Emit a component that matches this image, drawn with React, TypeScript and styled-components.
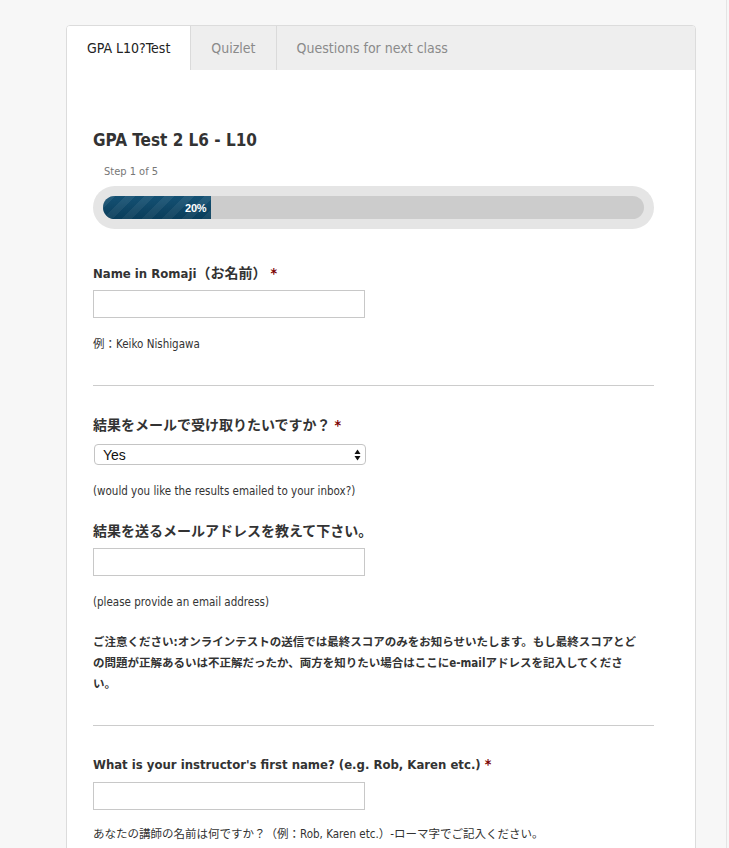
import styled, { createGlobalStyle } from 'styled-components';

const GlobalStyle = createGlobalStyle`
  html, body {
    margin: 0;
    padding: 0;
    background: #f7f7f7;
  }
  body {
    font-family: "DejaVu Sans Condensed", "DejaVu Sans", "Noto Sans CJK JP", sans-serif;
    color: #333;
  }
`;

const Page = styled.div`
  width: 727px;
  min-height: 848px;
  border-right: 1px solid #e4e4e4;
  background: #f7f7f7;
  padding: 25px 0 0 66px;
  box-sizing: border-box;
`;

const Card = styled.div`
  width: 630px;
  background: #fff;
  border: 1px solid #dcdcdc;
  border-radius: 4px;
  overflow: hidden;
  box-sizing: border-box;
`;

const TabBar = styled.div`
  display: flex;
  height: 44px;
  background: #eeeeee;
`;

const Tab = styled.div<{ $active?: boolean }>`
  display: flex;
  align-items: center;
  padding: 0 20px;
  font-size: 14px;
  color: ${p => (p.$active ? '#222' : '#8a8a8a')};
  background: ${p => (p.$active ? '#fff' : 'transparent')};
  border-right: 1px solid #dadada;
  white-space: nowrap;

  &:last-child {
    border-right: 0;
  }
`;

const Body = styled.div`
  padding: 59px 41px 40px 26px;
`;

const Title = styled.h2`
  margin: 0;
  font-size: 17px;
  line-height: 22px;
  font-weight: bold;
  color: #333;
`;

const StepText = styled.div`
  margin: 14px 0 0 11px;
  font-size: 11px;
  line-height: 14px;
  color: #777;
`;

const ProgressOuter = styled.div`
  margin-top: 7px;
  height: 43px;
  padding: 10px;
  box-sizing: border-box;
  background: #e5e5e5;
  border-radius: 22px;
`;

const ProgressTrack = styled.div`
  height: 23px;
  background: #cccccc;
  border-radius: 12px;
  overflow: hidden;
  display: flex;
`;

const ProgressFill = styled.div`
  height: 100%;
  display: flex;
  align-items: center;
  justify-content: flex-end;
  padding-right: 5px;
  box-sizing: border-box;
  background-color: #0b4a6e;
  background-image:
    linear-gradient(to bottom, rgba(255, 255, 255, 0.04), rgba(0, 0, 0, 0.18)),
    repeating-linear-gradient(
      -45deg,
      rgba(255, 255, 255, 0.07) 0 7px,
      transparent 7px 14px
    );
  color: #fff;
  font-family: "Liberation Sans", Arial, sans-serif;
  font-weight: bold;
  font-size: 11px;
  letter-spacing: -0.3px;
`;

const Field = styled.div<{ $top: number }>`
  margin-top: ${p => p.$top}px;
`;

const Label = styled.div`
  height: 18px;
  font-size: 13px;
  line-height: 18px;
  font-weight: bold;
  color: #333;
  white-space: nowrap;
`;

const Jp = styled.span`
  font-family: "Noto Sans CJK JP", sans-serif;
  font-size: 14px;
  line-height: 18px;
`;

const Required = styled.span`
  color: #7a0000;
  margin-left: 4px;
  font-size: 14px;
  line-height: 18px;
`;

const TextInput = styled.input`
  display: block;
  margin-top: 9px;
  width: 272px;
  height: 28px;
  border: 1px solid #c8c8c8;
  box-sizing: border-box;
  background: #fff;
  padding: 0 6px;
`;

const SelectBox = styled.div`
  margin-top: 11px;
  margin-left: 1px;
  width: 272px;
  height: 21px;
  border: 1px solid #c4c4c4;
  border-radius: 4px;
  box-sizing: border-box;
  display: flex;
  align-items: center;
  justify-content: space-between;
  padding: 0 4px 0 8px;
  font-family: "Liberation Sans", Arial, sans-serif;
  font-size: 14px;
  color: #111;
  background: #fff;
`;

const Help = styled.div<{ $top?: number }>`
  margin-top: ${p => p.$top ?? 19}px;
  font-size: 11.5px;
  line-height: 14px;
  color: #333;
`;

const Note = styled.div`
  margin-top: 23px;
  font-size: 11.5px;
  line-height: 21px;
  font-weight: bold;
  color: #333;
`;

const Divider = styled.hr<{ $top: number }>`
  margin: ${p => p.$top}px 0 0;
  border: 0;
  border-top: 1px solid #cccccc;
`;

const Arrows = () => (
  <svg width="7" height="12" viewBox="0 0 7 12">
    <path d="M3.5 0.5 L6.5 5 L0.5 5 Z" fill="#111" />
    <path d="M3.5 11.5 L6.5 7 L0.5 7 Z" fill="#111" />
  </svg>
);

export default function App() {
  return (
    <>
      <GlobalStyle />
      <Page>
        <Card>
          <TabBar>
            <Tab $active>GPA L10?Test</Tab>
            <Tab>Quizlet</Tab>
            <Tab>Questions for next class</Tab>
          </TabBar>
          <Body>
            <Title>GPA Test 2 L6 - L10</Title>
            <StepText>Step 1 of 5</StepText>
            <ProgressOuter>
              <ProgressTrack>
                <ProgressFill style={{ width: '20%' }}>20%</ProgressFill>
              </ProgressTrack>
            </ProgressOuter>

            <Field $top={34}>
              <Label>
                Name in Romaji<Jp>（お名前）</Jp>
                <Required>*</Required>
              </Label>
              <TextInput type="text" />
              <Help>例：Keiko Nishigawa</Help>
            </Field>

            <Divider $top={34} />

            <Field $top={29}>
              <Label>
                <Jp>結果をメールで受け取りたいですか？</Jp>
                <Required>*</Required>
              </Label>
              <SelectBox>
                <span>Yes</span>
                <Arrows />
              </SelectBox>
              <Help>(would you like the results emailed to your inbox?)</Help>
            </Field>

            <Field $top={23}>
              <Label>
                <Jp>結果を送るメールアドレスを教えて下さい。</Jp>
              </Label>
              <TextInput type="text" />
              <Help>(please provide an email address)</Help>
              <Note>
                ご注意ください:オンラインテストの送信では最終スコアのみをお知らせいたします。もし最終スコアとど
                <br />
                の問題が正解あるいは不正解だったか、両方を知りたい場合はここにe-mailアドレスを記入してくださ
                <br />
                い。
              </Note>
            </Field>

            <Divider $top={30} />

            <Field $top={29}>
              <Label>
                What is your instructor's first name? (e.g. Rob, Karen etc.)<Required>*</Required>
              </Label>
              <TextInput type="text" />
              <Help $top={17}>
                あなたの講師の名前は何ですか？（例：Rob, Karen etc.）-ローマ字でご記入ください。
              </Help>
            </Field>
          </Body>
        </Card>
      </Page>
    </>
  );
}
